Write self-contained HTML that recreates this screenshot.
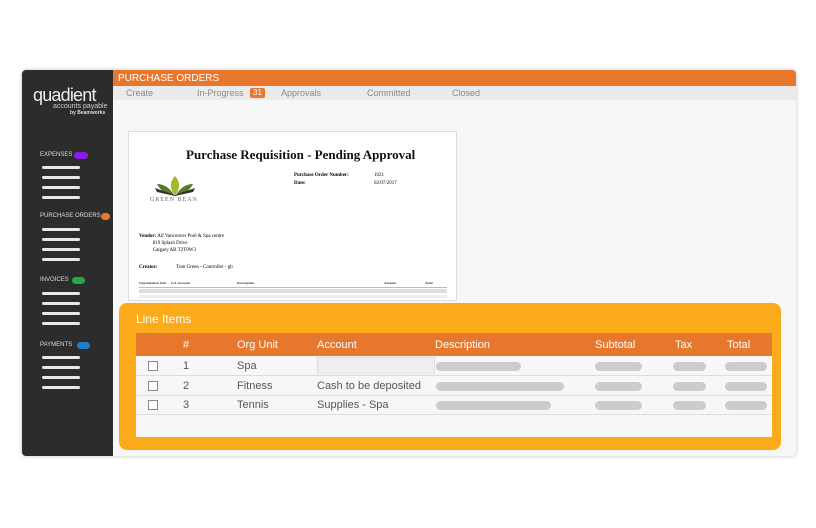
<!DOCTYPE html><html><head><style>
*{margin:0;padding:0;box-sizing:border-box}
body{width:816px;height:528px;background:#fff;position:relative;overflow:hidden;font-family:"Liberation Sans",sans-serif}
.a{position:absolute}
.win{left:22px;top:70px;width:774px;height:386px;background:#f7f7f7;border-radius:4px;box-shadow:0 0 4px rgba(0,0,0,.25);overflow:hidden}
.side{left:0;top:0;width:91px;height:386px;background:#2b2d2d}
.ln{position:absolute;left:20px;width:38px;height:3px;background:#e8e8e8;border-radius:2px}
.lab{position:absolute;left:18px;font-size:6px;color:#ddd}
.pill{position:absolute;height:7px;border-radius:4px}
.tab{position:absolute;top:18px;font-size:9px;color:#888}
.doc{left:106px;top:61px;width:329px;height:170px;background:#fff;border:1px solid #ddd;font-family:"Liberation Serif",serif}
.panel{left:97px;top:233px;width:662px;height:147px;background:#fbaa1a;border-radius:8px}
.tbl{left:17px;top:30px;width:636px;height:104px;background:#f7f7f7}
.hd{left:0;top:0;width:636px;height:23px;background:#e8772e;color:#fff;font-size:11px}
.hd span,.r span{position:absolute;top:6px}
.r{position:absolute;left:0;width:636px;height:19px;border-bottom:1px solid #ddd;font-size:11px;color:#555}
.r span{top:3px}
.cb{position:absolute;left:12px;top:4px;width:10px;height:10px;border:1px solid #888;background:#fff}
.bl{position:absolute;top:5px;height:9px;background:#ccc;border-radius:5px}
.dt{position:absolute;font-size:3.5px;color:#333}
</style></head><body>
<div class="a win">
 <div class="a side">
  <div class="a" style="left:11px;top:15px;color:#eee;font-size:18px;font-weight:300;letter-spacing:-.8px">quadient</div>
  <div class="a" style="left:31px;top:33px;color:#ccc;font-size:7px">accounts payable</div>
  <div class="a" style="left:48px;top:40px;color:#ddd;font-size:5px;font-weight:bold">by Beamworks</div>
  <div class="lab" style="top:82px">EXPENSES</div><div class="pill" style="left:52px;top:82px;width:14px;background:#8a1ce8"></div>
  <div class="ln" style="top:96px"></div><div class="ln" style="top:106px"></div><div class="ln" style="top:116px"></div><div class="ln" style="top:126px"></div>
  <div class="lab" style="top:143px">PURCHASE ORDERS</div><div class="pill" style="left:79px;top:143px;width:9px;background:#e8772e"></div>
  <div class="ln" style="top:158px"></div><div class="ln" style="top:168px"></div><div class="ln" style="top:178px"></div><div class="ln" style="top:188px"></div>
  <div class="lab" style="top:207px">INVOICES</div><div class="pill" style="left:50px;top:207px;width:13px;background:#27a844"></div>
  <div class="ln" style="top:222px"></div><div class="ln" style="top:232px"></div><div class="ln" style="top:242px"></div><div class="ln" style="top:252px"></div>
  <div class="lab" style="top:272px">PAYMENTS</div><div class="pill" style="left:55px;top:272px;width:13px;background:#1e7fc8"></div>
  <div class="ln" style="top:286px"></div><div class="ln" style="top:296px"></div><div class="ln" style="top:306px"></div><div class="ln" style="top:316px"></div>
 </div>
 <div class="a" style="left:91px;top:0;width:683px;height:16px;background:#e8772e;color:#fff;font-size:10px;padding:3px 0 0 5px">PURCHASE ORDERS</div>
 <div class="a" style="left:91px;top:16px;width:683px;height:14px;background:#ebebeb"></div>
 <div class="tab" style="left:104px">Create</div>
 <div class="tab" style="left:175px">In-Progress</div>
 <div class="a" style="left:228px;top:18px;width:15px;height:10px;background:#e8772e;border-radius:2px;color:#fff;font-size:8px;text-align:center">31</div>
 <div class="tab" style="left:259px">Approvals</div>
 <div class="tab" style="left:345px">Committed</div>
 <div class="tab" style="left:430px">Closed</div>
 <div class="a doc">
  <div class="a" style="left:57px;top:15px;font-size:13px;font-weight:bold;color:#111">Purchase Requisition - Pending Approval</div>
  <svg class="a" style="left:26px;top:42px" width="40" height="22"><path d="M20 2C14 8 15 16 20 21C25 16 26 8 20 2Z" fill="#a6b82e"/><path d="M2 10C6 18 14 21 19 21C15 14 9 10 2 10Z" fill="#5c7a2a"/><path d="M38 10C34 18 26 21 21 21C25 14 31 10 38 10Z" fill="#5c7a2a"/><path d="M0 14L20 21L40 14L38 18L20 22L2 18Z" fill="#333"/></svg>
  <div class="a" style="left:21px;top:65px;font-size:6px;color:#666;letter-spacing:1px">GREEN BEAN</div>
  <div class="a" style="left:165px;top:40px;font-size:5px;font-weight:bold;line-height:8px">Purchase Order Number:<br>Date:</div>
  <div class="a" style="left:245px;top:40px;font-size:5px;line-height:8px">1021<br>02/07/2017</div>
  <div class="a" style="left:10px;top:101px;font-size:5px;line-height:7px"><b>Vendor:</b> All Vancouver Pool &amp; Spa centre<br>&nbsp;&nbsp;&nbsp;&nbsp;&nbsp;&nbsp;&nbsp;&nbsp;&nbsp;&nbsp;&nbsp;819 Splash Drive<br>&nbsp;&nbsp;&nbsp;&nbsp;&nbsp;&nbsp;&nbsp;&nbsp;&nbsp;&nbsp;&nbsp;Calgary AB T2T0W3</div>
  <div class="a" style="left:10px;top:133px;font-size:5px"><b>Creator:</b>&nbsp;&nbsp;&nbsp;&nbsp;&nbsp;&nbsp;&nbsp;&nbsp;&nbsp;&nbsp;&nbsp;&nbsp;&nbsp;&nbsp;&nbsp;Tom Green - Controller - gb</div>
  <div class="dt" style="left:10px;top:149px;font-weight:bold">Organization Unit</div>
  <div class="dt" style="left:42px;top:149px;font-weight:bold">G/L Account</div>
  <div class="dt" style="left:108px;top:149px;font-weight:bold">Description</div>
  <div class="dt" style="left:255px;top:149px;font-weight:bold">Amount</div>
  <div class="dt" style="left:296px;top:149px;font-weight:bold">Total</div>
  <div class="a" style="left:10px;top:155px;width:308px;height:1px;background:#bbb"></div>
  <div class="a" style="left:10px;top:157px;width:308px;height:4px;background:#ddd"></div>
  <div class="a" style="left:10px;top:163px;width:308px;height:3px;background:#eee"></div>
 </div>
 <div class="a panel">
  <div class="a" style="left:17px;top:9px;color:#fff;font-size:12px">Line Items</div>
  <div class="a tbl">
   <div class="a hd"><span style="left:47px">#</span><span style="left:101px">Org Unit</span><span style="left:181px">Account</span><span style="left:299px">Description</span><span style="left:459px">Subtotal</span><span style="left:539px">Tax</span><span style="left:591px">Total</span></div>
   <div class="r" style="top:24px"><div class="cb"></div><span style="left:47px">1</span><span style="left:101px">Spa</span><div style="position:absolute;left:181px;top:0;width:118px;height:19px;background:#eee;border:1px solid #ddd"></div><div class="bl" style="left:300px;width:85px"></div><div class="bl" style="left:459px;width:47px"></div><div class="bl" style="left:537px;width:33px"></div><div class="bl" style="left:589px;width:42px"></div></div>
   <div class="r" style="top:44px"><div class="cb"></div><span style="left:47px">2</span><span style="left:101px">Fitness</span><span style="left:181px">Cash to be deposited</span><div class="bl" style="left:300px;width:128px"></div><div class="bl" style="left:459px;width:47px"></div><div class="bl" style="left:537px;width:33px"></div><div class="bl" style="left:589px;width:42px"></div></div>
   <div class="r" style="top:63px"><div class="cb"></div><span style="left:47px">3</span><span style="left:101px">Tennis</span><span style="left:181px">Supplies - Spa</span><div class="bl" style="left:300px;width:115px"></div><div class="bl" style="left:459px;width:47px"></div><div class="bl" style="left:537px;width:33px"></div><div class="bl" style="left:589px;width:42px"></div></div>
  </div>
 </div>
</div>
</body></html>
